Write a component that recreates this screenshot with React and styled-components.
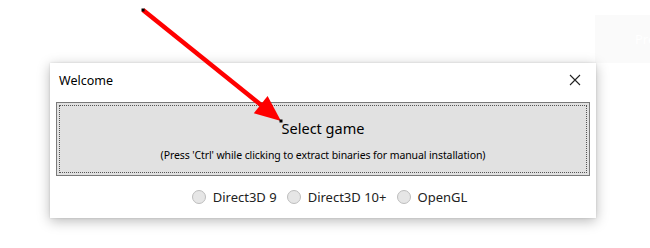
import React from "react";
import styled, { createGlobalStyle } from "styled-components";

const Global = createGlobalStyle`
  html, body { margin: 0; padding: 0; background: #ffffff; }
  body { font-family: "Noto Sans", "Open Sans", sans-serif; }
  #root { position: relative; width: 650px; height: 248px; overflow: hidden; }
`;

const Page = styled.div`
  position: relative;
  width: 650px;
  height: 248px;
  padding: 63px 0 0 50px;
  box-sizing: border-box;
`;

const GhostWindow = styled.div`
  position: absolute;
  left: 595px;
  top: 15px;
  width: 60px;
  height: 48px;
  background: #fafafa;
  color: #ffffff;
  font-size: 13px;
  padding: 15px 0 0 40px;
  box-sizing: border-box;
  overflow: hidden;
  white-space: nowrap;
`;

const Dialog = styled.div`
  position: relative;
  width: 546px;
  height: 155px;
  background: #ffffff;
  box-shadow: 0 3px 12px rgba(0, 0, 0, 0.28), 0 0 2px rgba(0, 0, 0, 0.12);
  display: flex;
  flex-direction: column;
  padding: 0 6px;
  box-sizing: border-box;
`;

const TitleBar = styled.div`
  height: 39px;
  display: flex;
  align-items: center;
  justify-content: space-between;
  padding: 0 8px 0 3px;
`;

const Title = styled.span`
  font-size: 12.5px;
  color: #000;
  margin-top: -5px;
`;

const Close = styled.div`
  width: 14px;
  height: 14px;
  display: flex;
  margin-top: -6px;
`;

const BigButton = styled.div`
  height: 74px;
  border: 1px solid #7a7a7a;
  background: #e1e1e1;
  box-sizing: border-box;
  padding: 2px;
  display: flex;
`;

const FocusRect = styled.div`
  flex: 1;
  border: 1px dotted #555;
  display: flex;
  flex-direction: column;
  align-items: center;
  color: #000;
`;

const MainLabel = styled.div`
  font-size: 14.5px;
  margin-top: 12px;
  line-height: 20px;
`;

const SubLabel = styled.div`
  font-size: 10.5px;
  margin-top: 10px;
  line-height: 14px;
  letter-spacing: -0.1px;
`;

const RadioRow = styled.div`
  flex: 1;
  display: flex;
  justify-content: center;
  align-items: center;
  gap: 10px;
  padding-left: 13px;
`;

const RadioItem = styled.label`
  display: flex;
  align-items: center;
  gap: 7px;
  font-size: 13px;
  color: #222;
`;

const RadioDot = styled.span`
  width: 12px;
  height: 12px;
  border-radius: 50%;
  border: 1px solid #bdbdbd;
  background: #e6e6e6;
`;

const Overlay = styled.svg`
  position: absolute;
  left: 0;
  top: 0;
  pointer-events: none;
`;

export default function App() {
  const options = ["Direct3D 9", "Direct3D 10+", "OpenGL"];
  return (
    <>
      <Global />
      <Page>
        <GhostWindow>Press</GhostWindow>
        <Dialog>
          <TitleBar>
            <Title>Welcome</Title>
            <Close>
              <svg width="14" height="14" viewBox="0 0 14 14">
                <path d="M2 2 L12 12 M12 2 L2 12" stroke="#222" strokeWidth="1.1" fill="none" />
              </svg>
            </Close>
          </TitleBar>
          <BigButton>
            <FocusRect>
              <MainLabel>Select game</MainLabel>
              <SubLabel>(Press 'Ctrl' while clicking to extract binaries for manual installation)</SubLabel>
            </FocusRect>
          </BigButton>
          <RadioRow>
            {options.map((o) => (
              <RadioItem key={o}>
                <RadioDot />
                {o}
              </RadioItem>
            ))}
          </RadioRow>
        </Dialog>
        <Overlay width="650" height="248" viewBox="0 0 650 248">
          <line x1="143" y1="10" x2="262" y2="105.8" stroke="#ff0000" strokeWidth="4.5" />
          <polygon points="281,121 253.8,113.3 267.6,96.1" fill="#ff0000" />
          <rect x="141.5" y="8.5" width="3" height="3" fill="#000" />
          <rect x="279.5" y="119.5" width="3" height="3" fill="#000" />
        </Overlay>
      </Page>
    </>
  );
}
